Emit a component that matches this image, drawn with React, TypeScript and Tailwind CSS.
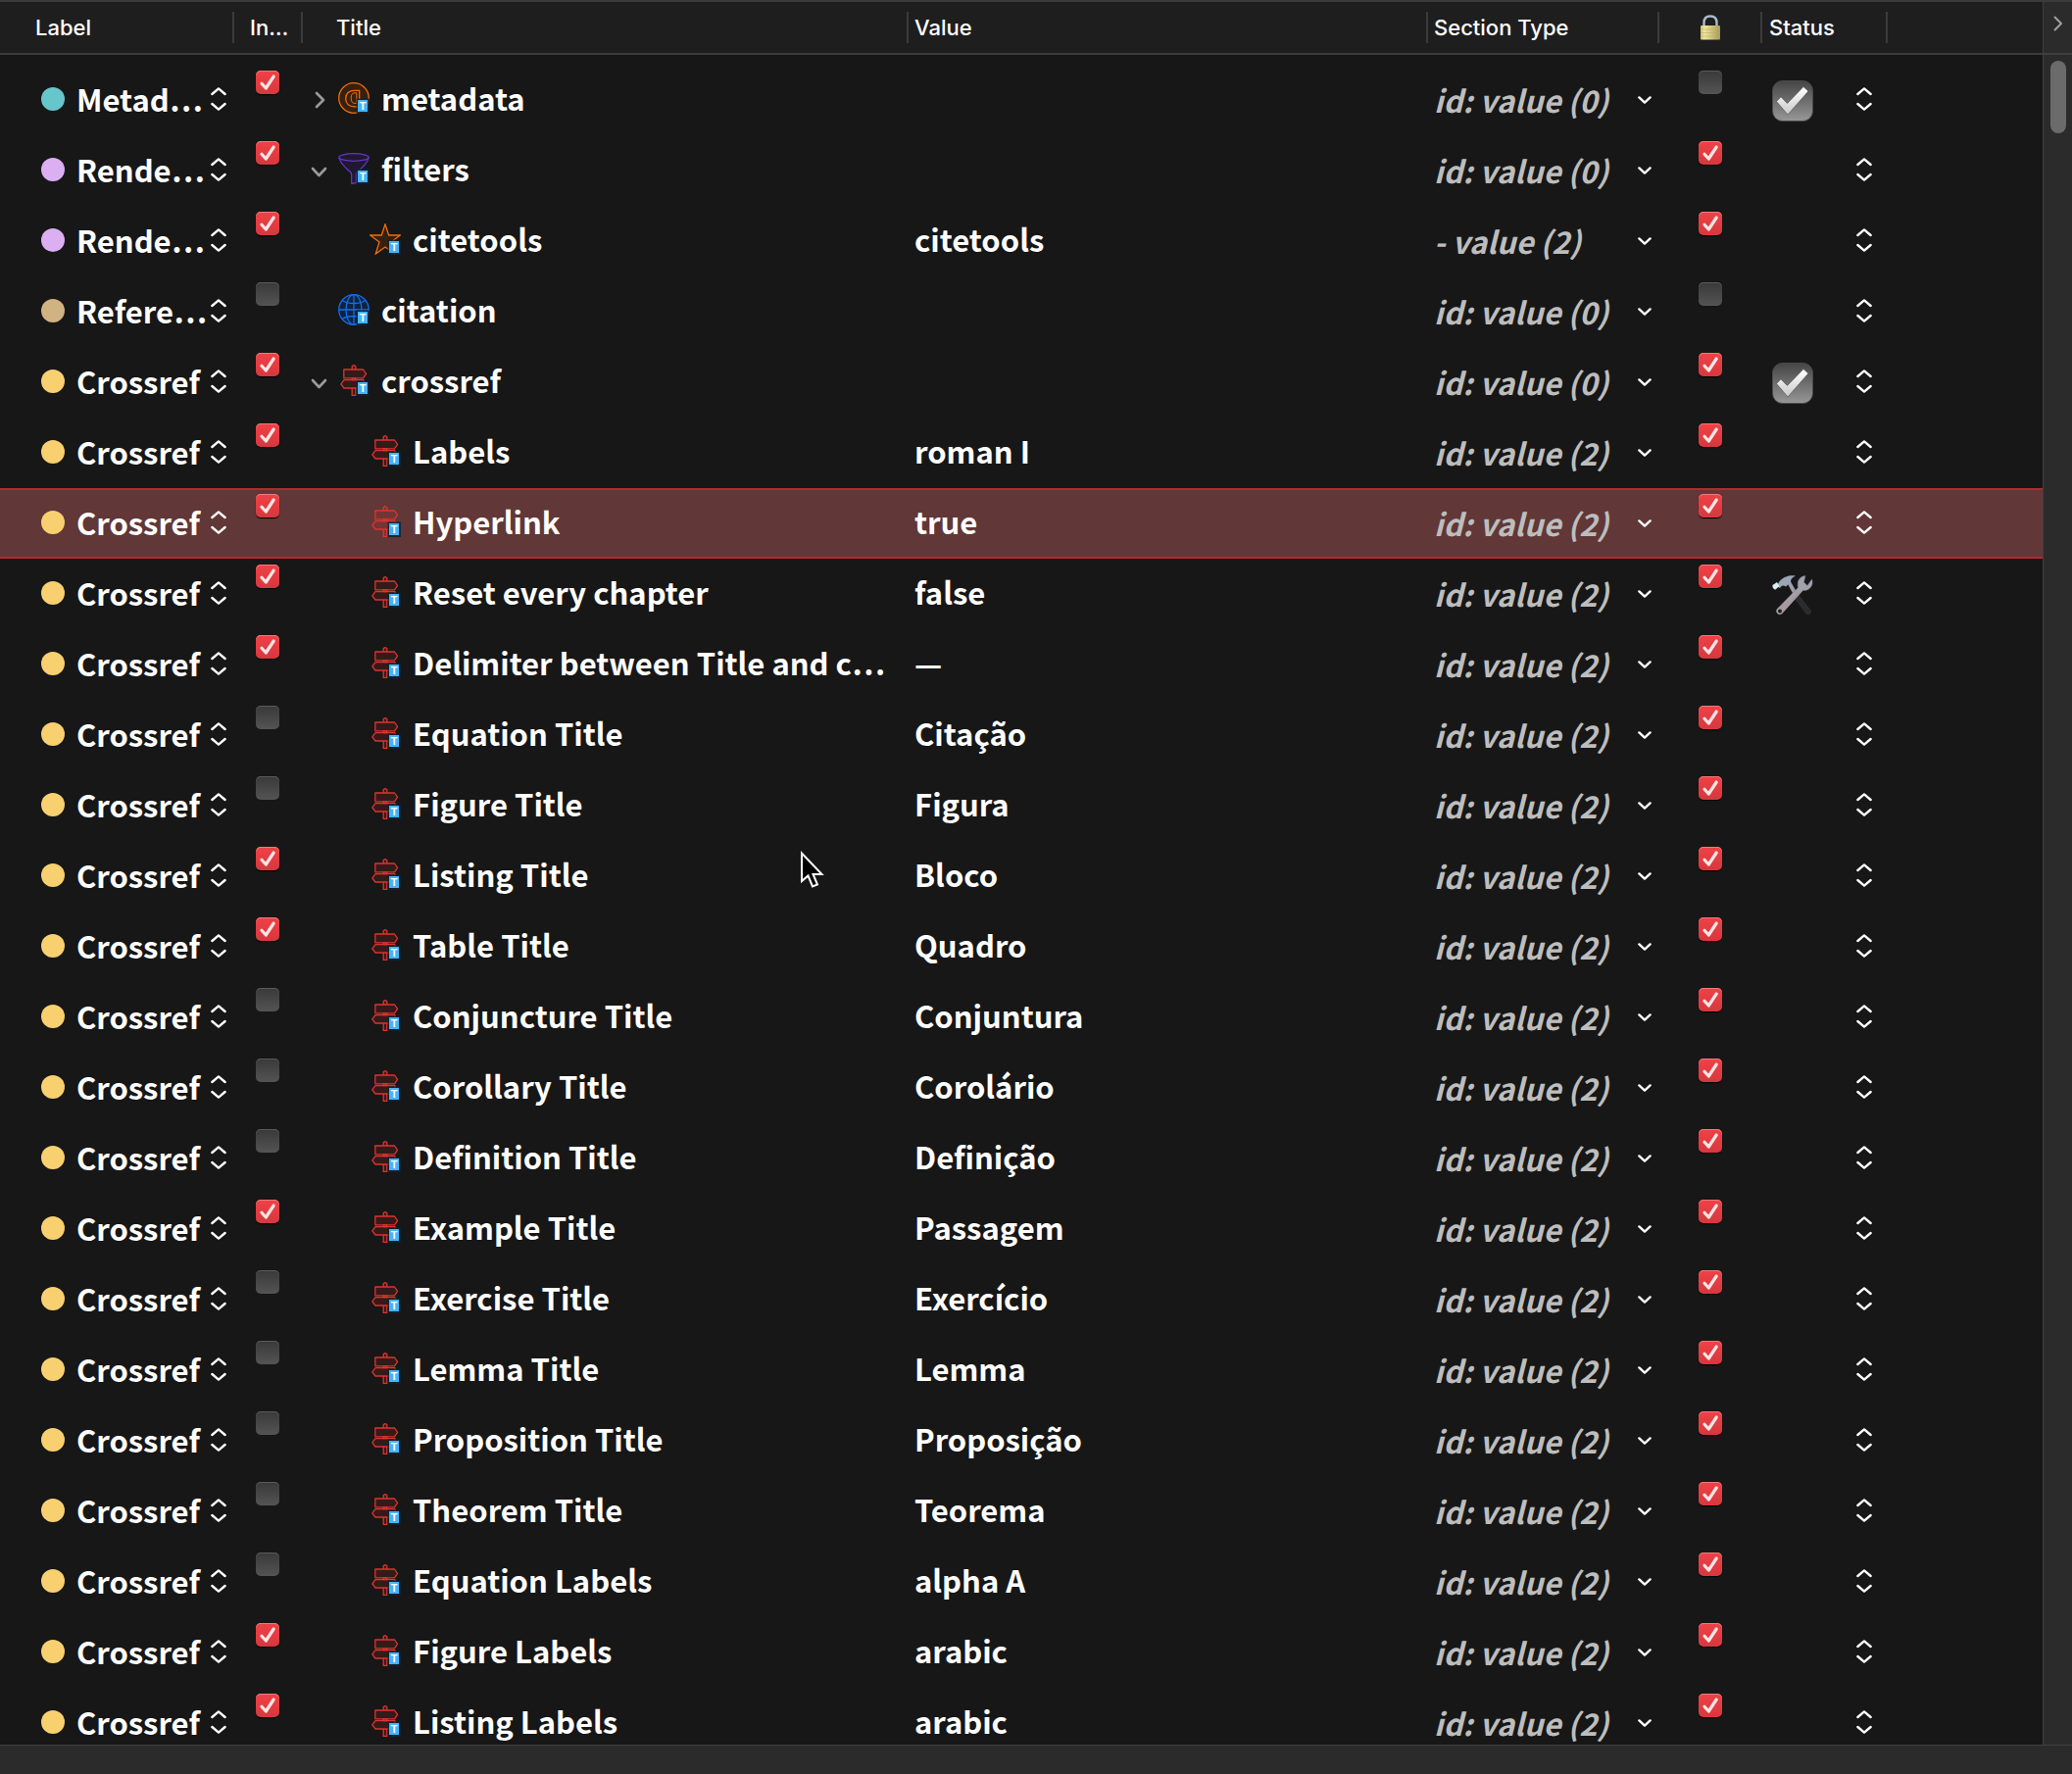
import React, { useState } from "react";

type Kind = "at" | "funnel" | "star" | "globe" | "sign";
type Row = {
  label: string;
  color: string;
  include: boolean;
  open?: "open" | "closed";
  child?: boolean;
  icon: Kind;
  title: string;
  value: string;
  section: string;
  locked: boolean;
  status?: "done" | "tools";
  selected?: boolean;
};

const ref = (title: string, value: string, include: boolean, extra: Partial<Row> = {}): Row => ({
  label: "Crossref",
  color: "bg-[#f8d070]",
  include,
  child: true,
  icon: "sign",
  title,
  value,
  section: "id: value (2)",
  locked: true,
  ...extra,
});

const rows: Row[] = [
  { label: "Metad…", color: "bg-[#67c5cc]", include: true, open: "closed", icon: "at", title: "metadata", value: "", section: "id: value (0)", locked: false, status: "done" },
  { label: "Rende…", color: "bg-[#dcaef2]", include: true, open: "open", icon: "funnel", title: "filters", value: "", section: "id: value (0)", locked: true },
  { label: "Rende…", color: "bg-[#dcaef2]", include: true, child: true, icon: "star", title: "citetools", value: "citetools", section: "- value (2)", locked: true },
  { label: "Refere…", color: "bg-[#d1b283]", include: false, icon: "globe", title: "citation", value: "", section: "id: value (0)", locked: false },
  ref("crossref", "", true, { child: false, open: "open", section: "id: value (0)", status: "done" }),
  ref("Labels", "roman I", true),
  ref("Hyperlink", "true", true, { selected: true }),
  ref("Reset every chapter", "false", true, { status: "tools" }),
  ref("Delimiter between Title and c…", "—", true),
  ref("Equation Title", "Citação", false),
  ref("Figure Title", "Figura", false),
  ref("Listing Title", "Bloco", true),
  ref("Table Title", "Quadro", true),
  ref("Conjuncture Title", "Conjuntura", false),
  ref("Corollary Title", "Corolário", false),
  ref("Definition Title", "Definição", false),
  ref("Example Title", "Passagem", true),
  ref("Exercise Title", "Exercício", false),
  ref("Lemma Title", "Lemma", false),
  ref("Proposition Title", "Proposição", false),
  ref("Theorem Title", "Teorema", false),
  ref("Equation Labels", "alpha A", false),
  ref("Figure Labels", "arabic", true),
  ref("Listing Labels", "arabic", true),
];

function Badge() {
  return (
    <g>
      <rect x="18.5" y="16.5" width="13.5" height="15.5" fill="#0c2433" fillOpacity=".8" />
      <rect x="20" y="18" width="10" height="12" fill="#46b4fb" />
      <text x="25" y="28" textAnchor="middle" fontSize="11" fontWeight="700" fontFamily="Liberation Sans" fill="#fff">T</text>
    </g>
  );
}

function ItemIcon({ kind }: { kind: Kind }) {
  return (
    <svg aria-hidden viewBox="0 0 32 32" className="size-8 shrink-0" fill="none" strokeWidth="1.3" strokeLinejoin="round">
      {kind === "at" && (
        <g stroke="#f06c0c">
          <circle cx="16" cy="16" r="15.3" fill="#38200f" />
          <path d="M21.7 20V8.300H16.500C11.200 8.300 7.700 11.600 7.700 16.500S11 24.800 16.500 24.800H20" />
          <path d="M18.800 20.500V10.800H17C14.300 10.800 13.200 12.600 13.200 16S14.400 21.400 17 21.400H19" strokeWidth="1" />
        </g>
      )}
      {kind === "funnel" && (
        <g stroke="#6336c4">
          <path d="M.8 4.500C1.500 10.500 8 15.500 12.500 19.500 13.500 20.500 13.700 21 13.700 22.500V31.500L18.300 30.500V22.500C18.300 21 18.500 20.500 19.500 19.500 24 15.500 30.500 10.500 31.200 4.500" fill="#20182e" />
          <ellipse cx="16" cy="4.5" rx="15.2" ry="3.8" fill="#20182e" />
        </g>
      )}
      {kind === "star" && (
        <path d="M16 .8 19.700 12H31.300L22 19 25.700 31 16 24 6.300 31 10 19 .7 12H12.300Z" stroke="#f06c0c" fill="#38200f" strokeLinejoin="miter" />
      )}
      {kind === "globe" && (
        <g stroke="#0f6fef">
          <circle cx="16" cy="16" r="15.3" fill="#11223c" />
          <ellipse cx="16" cy="16" rx="8" ry="15.3" />
          <path d="M16 .7V31.300M.7 16H31.300M4 6.500C10 10.500 22 10.500 28 6.500M4 25.500C10 21.500 22 21.500 28 25.500" />
        </g>
      )}
      {kind === "sign" && (
        <g stroke="#dc342f" fill="#dc342f" fillOpacity=".15">
          <path d="M14.200 5V1.500L16 .6 17.800 1.500V5M14.200 13.800H17.800V15.700H14.200ZM14.200 24V31.400H17.800V24" />
          <path d="M5.800 5H25.500L28.600 9.400 25.500 13.800H5.800Z" />
          <path d="M6 15.700H26V24H6L2.800 19.800Z" />
        </g>
      )}
      <Badge />
    </svg>
  );
}

function Stepper() {
  return (
    <svg aria-hidden viewBox="0 0 16 24" className="pointer-events-none h-6 w-4 shrink-0" fill="none" stroke="#fff" strokeWidth="2.4" strokeLinecap="round" strokeLinejoin="round">
      <path d="M1.400 7 8 1.400 14.600 7M1.400 17 8 22.600 14.600 17" />
    </svg>
  );
}

function Check({ on, name }: { on: boolean; name: string }) {
  const [checked, setChecked] = useState(on);
  return (
    <span className="grid size-6">
      <input
        type="checkbox"
        aria-label={name}
        checked={checked}
        onChange={(e) => setChecked(e.target.checked)}
        className="col-start-1 row-start-1 size-6 appearance-none rounded-[5px] bg-linear-to-b from-[#393939] to-[#545454] shadow-[inset_0_1px_0_#5a5a5a] checked:from-[#f04146] checked:to-[#d5383e] checked:shadow-[inset_0_1px_0_#f4797c,0_1px_1px_#000]"
      />
      {checked && (
        <svg aria-hidden viewBox="0 0 24 24" className="pointer-events-none col-start-1 row-start-1 size-6" fill="none" stroke="#fde4e4" strokeWidth="3.2" strokeLinecap="round" strokeLinejoin="round">
          <path d="M6 13.200 10.300 18 18.200 6" />
        </svg>
      )}
    </span>
  );
}

function StatusIcon({ kind }: { kind: "done" | "tools" }) {
  if (kind === "done")
    return (
      <svg aria-hidden viewBox="0 0 42 42" className="pointer-events-none col-start-1 row-start-1 mt-1 size-[42px]">
        <defs>
          <linearGradient id="tile" x1="0" y1="0" x2="0" y2="1">
            <stop offset="0" stopColor="#454545" />
            <stop offset="1" stopColor="#979797" />
          </linearGradient>
          <linearGradient id="mark" x1="0" y1="0" x2="0" y2="1">
            <stop offset="0" stopColor="#fff" />
            <stop offset="1" stopColor="#c9c9c9" />
          </linearGradient>
        </defs>
        <rect x=".5" y=".5" width="41" height="41" rx="10" fill="url(#tile)" stroke="#4a4a4a" />
        <path d="M4.500 21.500 9 16.800 15.500 23.500 32 6.500 37 11 16 35Z" fill="url(#mark)" stroke="#444" strokeWidth=".6" />
      </svg>
    );
  return (
    <svg aria-hidden viewBox="0 0 42 42" className="pointer-events-none col-start-1 row-start-1 mt-1 size-[42px]">
      <path d="M20 20 24 17 39.500 37.500C40 40 37 42 35 40Z" fill="#292b2d" stroke="#3a3c3e" strokeWidth=".6" />
      <path d="M15.500 9 19 7.500 25 18 22 21Z" fill="#9b9ea8" />
      <path d="M26.500 13.500C25 7 28 2 34 1.500L32.500 8 36 11.500 40.500 5C43 11 38 17 31.500 16.500L10.500 39.500C7 43 2.500 38.500 5.500 35Z" fill="#a2a2ad" stroke="#737682" strokeWidth=".5" />
      <path d="M22 22 26 18 31 16.500 10.500 39.500C7 43 2.500 38.500 5.500 35Z" fill="#a8999e" />
      <circle cx="8" cy="37.5" r="2" fill="#1d1d1d" />
      <path d="M6 9.500C10 3 16 .5 24 1.500 20 3.500 19 5 19 8L14 12.500C11 10.500 9.500 11.500 8 14L4.500 12Z" fill="#9aa5b5" />
      <path d="M.5 11 5 8 7.500 12 3.500 15.500C1.500 15.500 0 13 .5 11Z" fill="#dcecf3" />
    </svg>
  );
}

function LockIcon() {
  return (
    <svg role="img" aria-label="Locked" viewBox="0 0 22 26" className="mx-auto h-[26px] w-[22px]">
      <defs>
        <linearGradient id="brass" x1="0" x2="1">
          <stop offset="0" stopColor="#c9c06c" />
          <stop offset=".2" stopColor="#f0e89a" />
          <stop offset="1" stopColor="#a89a58" />
        </linearGradient>
      </defs>
      <path d="M4.500 12V8C4.500 4 7 1.500 11 1.500S17.500 4 17.500 8V12" fill="none" stroke="#a9bccb" strokeWidth="2.4" />
      <rect x="1" y="11" width="20" height="14.5" rx="1" fill="url(#brass)" />
      <path d="M1.500 15H20.500M1.500 18.500H20.500M1.500 22H20.500" stroke="#b3a765" strokeWidth=".5" />
    </svg>
  );
}

function Head({ children, pad, line = true }: { children?: React.ReactNode; pad: string; line?: boolean }) {
  return (
    <th scope="col" className="border-b-2 border-[#3b3b3b] bg-[#1e1e1e] p-0 text-left text-[22px] font-medium">
      <div className="flex h-[52px] items-center">
        <div className={`min-w-0 flex-1 whitespace-nowrap ${pad}`}>{children}</div>
        {line && <div className="h-8 w-0.5 bg-[#3b3b3b]" />}
      </div>
    </th>
  );
}

function TableRow({ row }: { row: Row }) {
  const cell = row.selected ? "border-y-2 border-[#b02a31] bg-[#613737] p-0 align-top" : "border-y-2 border-transparent p-0 align-top";
  return (
    <tr aria-selected={!!row.selected}>
      <td className={cell}>
        <div className="flex h-[68px] items-center pb-0.5 pl-[42px]">
          <span className={`size-6 shrink-0 rounded-full ${row.color}`} />
          <span className="ml-3 grid flex-1 items-center">
            <select aria-label={`Label of ${row.title}`} className="col-start-1 row-start-1 h-12 w-full appearance-none text-[31px] font-bold">
              <option>{row.label}</option>
            </select>
            <span className="pointer-events-none col-start-1 row-start-1 mr-2 justify-self-end"><Stepper /></span>
          </span>
        </div>
      </td>
      <td className={cell}>
        <div className="pt-1 pl-[22px]"><Check on={row.include} name={`Include ${row.title}`} /></div>
      </td>
      <td className={cell}>
        <div className={`flex h-[68px] items-center pb-1 ${row.child ? "pl-10" : "pl-2"}`}>
          <span className="flex w-7 pt-1">
            {row.open && (
              <button type="button" aria-label={`Toggle ${row.title}`} aria-expanded={row.open === "open"}>
                <svg aria-hidden viewBox="0 0 18 18" className="size-[18px]" fill="none" stroke="#9a9a9a" strokeWidth="2.6" strokeLinecap="round" strokeLinejoin="round">
                  <path d={row.open === "open" ? "M2 7 8.500 14 15 7" : "M6 2 13 9 6 16"} />
                </svg>
              </button>
            )}
          </span>
          <ItemIcon kind={row.icon} />
          <span className="ml-3 text-[31px] leading-10 font-bold whitespace-nowrap">{row.title}</span>
        </div>
      </td>
      <td className={cell}>
        <div className="flex h-[68px] items-center pb-1 pl-1.5 text-[31px] leading-10 font-bold whitespace-nowrap">{row.value}</div>
      </td>
      <td className={cell}>
        <div className="grid h-[68px] items-center pl-1.5">
          <select aria-label={`Section type of ${row.title}`} className="col-start-1 row-start-1 h-12 w-full appearance-none text-[31px] font-bold text-[#bdbdbd] italic">
            <option>{row.section}</option>
          </select>
          <svg aria-hidden viewBox="0 0 14 8" className="pointer-events-none col-start-1 row-start-1 mr-2 h-2 w-3.5 justify-self-end" fill="none" stroke="#fff" strokeWidth="2.4" strokeLinecap="round" strokeLinejoin="round">
            <path d="M1.400 1.400 7 6.600 12.600 1.400" />
          </svg>
        </div>
      </td>
      <td className={cell}>
        <div className="pt-1 pl-10"><Check on={row.locked} name={`Lock ${row.title}`} /></div>
      </td>
      <td className={cell}>
        <div className="grid h-[68px] items-center pb-0.5 pl-2.5">
          <select aria-label={`Status of ${row.title}`} className="col-start-1 row-start-1 h-11 w-full appearance-none">
            <option></option>
          </select>
          {row.status && <StatusIcon kind={row.status} />}
          <span className="pointer-events-none col-start-1 row-start-1 mr-4 justify-self-end"><Stepper /></span>
        </div>
      </td>
      <td className={cell} />
    </tr>
  );
}

export default function App() {
  return (
    <div className="relative flex h-screen flex-col overflow-hidden bg-[#171717] font-['Noto_Sans_CJK_KR',sans-serif] text-white">
      <div className="flex min-h-0 flex-1 border-t-2 border-[#3b3b3b]">
        <div className="min-w-0 flex-1 overflow-hidden">
          <table className="w-full table-fixed border-separate border-spacing-0">
            <colgroup>
              <col className="w-[239px]" />
              <col className="w-[70px]" />
              <col className="w-[618px]" />
              <col />
              <col className="w-[236px]" />
              <col className="w-[105px]" />
              <col className="w-[128px]" />
              <col className="w-[158px]" />
            </colgroup>
            <thead className="font-['Inter',sans-serif]">
              <tr>
                <Head pad="pl-9">Label</Head>
                <Head pad="pl-4">In…</Head>
                <Head pad="pl-[34px]">Title</Head>
                <Head pad="pl-1.5">Value</Head>
                <Head pad="pl-1.5">Section Type</Head>
                <Head pad=""><LockIcon /></Head>
                <Head pad="pl-[7px]">Status</Head>
                <Head pad="" line={false} />
              </tr>
            </thead>
            <tbody>
              <tr aria-hidden><td colSpan={8} className="h-2.5 p-0" /></tr>
              {rows.map((r) => <TableRow key={r.title} row={r} />)}
            </tbody>
          </table>
        </div>
        <div className="flex w-[30px] flex-col border-l border-[#3f3f3f] bg-[#2b2b2b]">
          <button type="button" aria-label="More columns" className="flex h-[54px] items-center justify-center border-b-2 border-[#3f3f3f] pb-2">
            <svg aria-hidden viewBox="0 0 10 16" className="h-4 w-2.5" fill="none" stroke="#a0a0a0" strokeWidth="2" strokeLinecap="round" strokeLinejoin="round">
              <path d="M1.500 1.500 8 8 1.500 14.500" />
            </svg>
          </button>
          <div className="mx-auto mt-1.5 h-[74px] w-4 rounded-full bg-[#6b6b6b]" />
        </div>
      </div>
      <div className="h-[30px] shrink-0 border-t border-[#3f3f3f] bg-[#2b2b2b]" />
      <svg aria-hidden viewBox="0 0 26 40" className="pointer-events-none absolute top-[867px] left-[816px] h-10 w-[26px]">
        <path d="M2 3.500V32L8.500 26.500 13 37.500 18 35.500 13.500 25H22.500Z" fill="#000" stroke="#fff" strokeWidth="2" />
      </svg>
    </div>
  );
}
